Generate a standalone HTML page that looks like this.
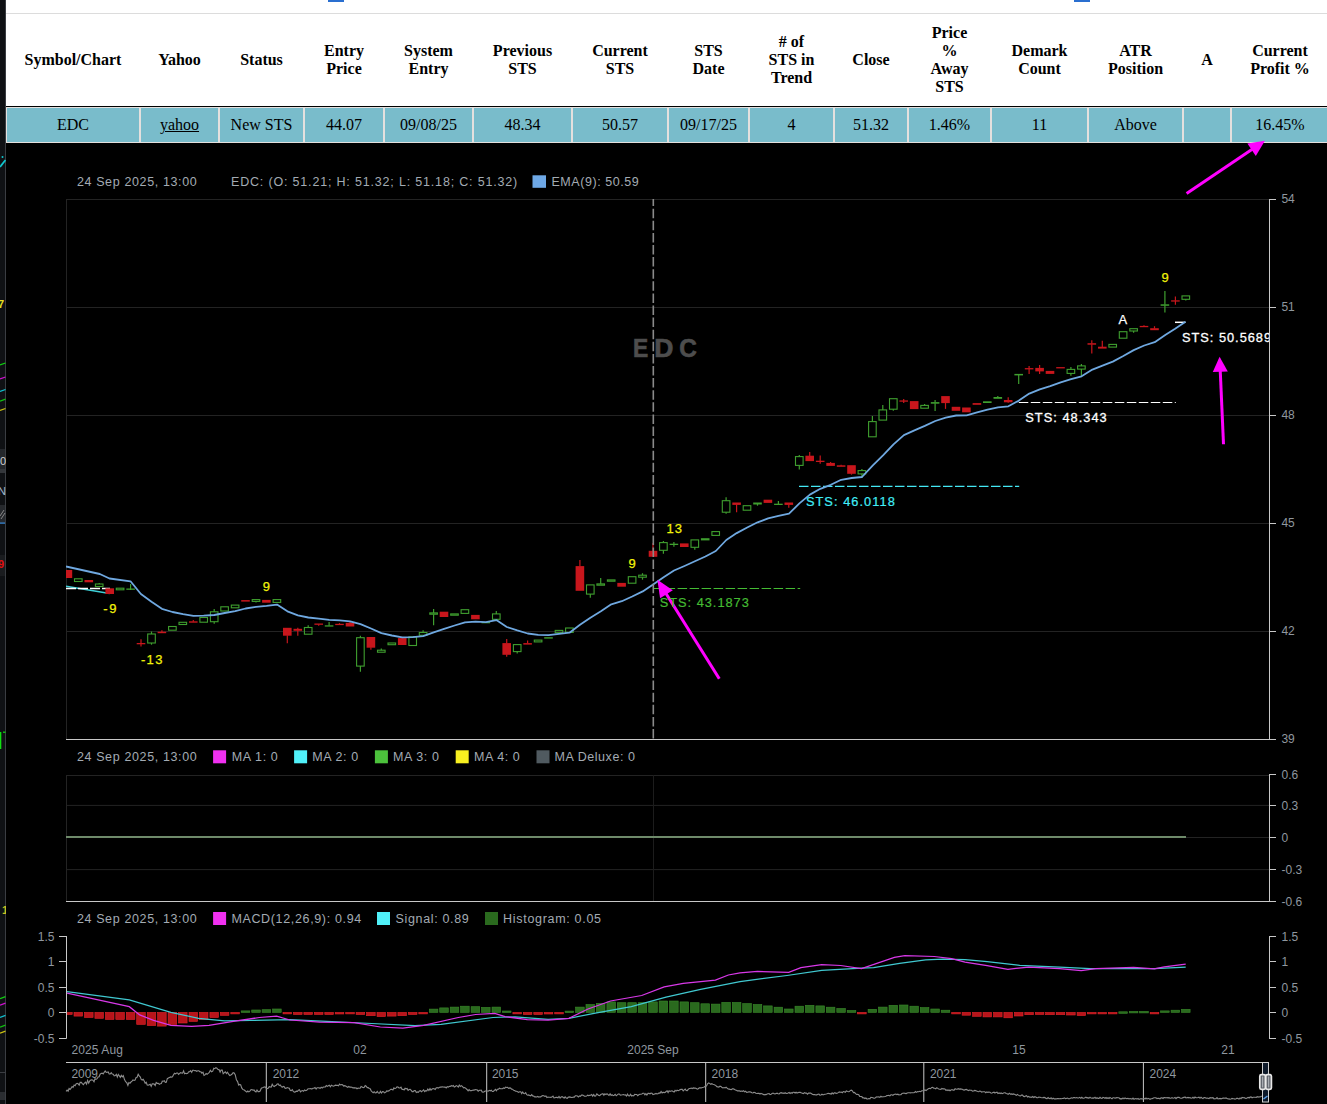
<!DOCTYPE html><html><head><meta charset="utf-8"><style>
*{margin:0;padding:0;box-sizing:border-box}
html,body{width:1327px;height:1104px;overflow:hidden;background:#000}
body{position:relative;font-family:"Liberation Sans",sans-serif}
.a{position:absolute}
.th{position:absolute;top:14px;height:92px;display:flex;align-items:center;justify-content:center;text-align:center;font:bold 16px/18px "Liberation Serif",serif;color:#000}
.td{position:absolute;top:108px;height:34px;background:#79bccb;display:flex;align-items:center;justify-content:center;font:16px/18px "Liberation Serif",serif;color:#000}
.lg{position:absolute;font-size:12.5px;line-height:15px;letter-spacing:0.55px;color:#a3abb3;white-space:nowrap}
.sq{position:absolute;width:12px;height:12px}
.ax{position:absolute;font-size:12.5px;line-height:14px;letter-spacing:0.4px;color:#9ba3ab;white-space:nowrap}
</style></head><body>

<div class="a" style="left:0;top:0;width:1327px;height:143px;background:#fff"></div>
<div class="a" style="left:6px;top:13px;width:1321px;height:1px;background:#dcdcdc"></div>
<div class="a" style="left:328px;top:0;width:16px;height:2px;background:#2a6fd0"></div>
<div class="a" style="left:1074px;top:0;width:16px;height:2px;background:#2a6fd0"></div>
<div class="a" style="left:6px;top:106px;width:1321px;height:1px;background:#000"></div>
<div class="a" style="left:6px;top:107px;width:1321px;height:36px;background:#e4e0de"></div>
<div class="th" style="left:7px;width:132px">Symbol/Chart</div>
<div class="td" style="left:7px;width:132px">EDC</div>
<div class="th" style="left:141px;width:77px">Yahoo</div>
<div class="td" style="left:141px;width:77px"><u>yahoo</u></div>
<div class="th" style="left:220px;width:83px">Status</div>
<div class="td" style="left:220px;width:83px">New STS</div>
<div class="th" style="left:305px;width:78px">Entry<br>Price</div>
<div class="td" style="left:305px;width:78px">44.07</div>
<div class="th" style="left:385px;width:87px">System<br>Entry</div>
<div class="td" style="left:385px;width:87px">09/08/25</div>
<div class="th" style="left:474px;width:97px">Previous<br>STS</div>
<div class="td" style="left:474px;width:97px">48.34</div>
<div class="th" style="left:573px;width:94px">Current<br>STS</div>
<div class="td" style="left:573px;width:94px">50.57</div>
<div class="th" style="left:669px;width:79px">STS<br>Date</div>
<div class="td" style="left:669px;width:79px">09/17/25</div>
<div class="th" style="left:750px;width:83px"># of<br>STS in<br>Trend</div>
<div class="td" style="left:750px;width:83px">4</div>
<div class="th" style="left:835px;width:72px">Close</div>
<div class="td" style="left:835px;width:72px">51.32</div>
<div class="th" style="left:909px;width:81px">Price<br>%<br>Away<br>STS</div>
<div class="td" style="left:909px;width:81px">1.46%</div>
<div class="th" style="left:992px;width:95px">Demark<br>Count</div>
<div class="td" style="left:992px;width:95px">11</div>
<div class="th" style="left:1089px;width:93px">ATR<br>Position</div>
<div class="td" style="left:1089px;width:93px">Above</div>
<div class="th" style="left:1184px;width:46px">A</div>
<div class="td" style="left:1184px;width:46px"></div>
<div class="th" style="left:1232px;width:96px">Current<br>Profit %</div>
<div class="td" style="left:1232px;width:96px">16.45%</div>
<div class="a" style="left:0;top:0;width:5px;height:1104px;background:#0f1114"></div>
<div class="a" style="left:5px;top:0;width:1px;height:1104px;background:#3a3d42"></div>
<svg class="a" style="left:0;top:0" width="6" height="1104"><rect x="0" y="449" width="5" height="20" fill="#24272b"/><rect x="0" y="469" width="5" height="4" fill="#34373b"/><rect x="0" y="505" width="5" height="18" fill="#26292d"/><rect x="0" y="522.5" width="5" height="1.2" fill="#3a8ee0"/><rect x="0" y="555" width="5" height="21" fill="#1a1c1f"/><text x="0" y="465" font-family="Liberation Sans" font-size="11" fill="#cfcfcf">0</text><text x="-2" y="495" font-family="Liberation Sans" font-size="11" fill="#a0b8d0">N</text><path d="M0,516 L4,510 M1,519 L5,513" stroke="#888" stroke-width="1"/><text x="-2" y="568" font-family="Liberation Sans" font-size="11" font-weight="bold" fill="#e01010">9</text><text x="-2" y="308" font-family="Liberation Sans" font-size="11" font-weight="bold" fill="#e8e020">7</text><text x="2" y="914" font-family="Liberation Sans" font-size="11" font-weight="bold" fill="#c8c020">1</text><circle cx="2.5" cy="157" r="1" fill="#10c8d0"/><line x1="0" y1="167" x2="5.5" y2="160" stroke="#10c8d0" stroke-width="1.8"/><line x1="0" y1="365.0" x2="5.5" y2="363.0" stroke="#10d010" stroke-width="1.3"/><line x1="0" y1="379.0" x2="5.5" y2="377.0" stroke="#d010d0" stroke-width="1.3"/><line x1="0" y1="391.5" x2="5.5" y2="389.5" stroke="#10c0d0" stroke-width="1.3"/><line x1="0" y1="401.1" x2="5.5" y2="399.1" stroke="#10c010" stroke-width="1.3"/><line x1="0" y1="410.5" x2="5.5" y2="408.5" stroke="#c8c010" stroke-width="1.3"/><line x1="0" y1="998.7" x2="5.5" y2="996.7" stroke="#10d010" stroke-width="1.3"/><line x1="0" y1="1005.2" x2="5.5" y2="1003.2" stroke="#d010d0" stroke-width="1.3"/><line x1="0" y1="1017.4" x2="5.5" y2="1015.4" stroke="#10c0d0" stroke-width="1.3"/><line x1="0" y1="1027.1" x2="5.5" y2="1025.1" stroke="#10c010" stroke-width="1.3"/><line x1="0" y1="1033.2" x2="5.5" y2="1031.2" stroke="#c8c010" stroke-width="1.3"/><rect x="0" y="732" width="1.3" height="17" fill="#10e010"/><rect x="3" y="731.6" width="2.5" height="1.2" fill="#10e010"/><rect x="0" y="1072" width="5" height="1" fill="#3a3d42"/><rect x="0" y="1092" width="5" height="8" fill="#2a2d31"/></svg>
<svg class="a" style="left:0;top:0" width="1327" height="1104" viewBox="0 0 1327 1104">
<line x1="66" y1="199.5" x2="1269" y2="199.5" stroke="#232323"/>
<line x1="66" y1="307.5" x2="1269" y2="307.5" stroke="#232323"/>
<line x1="66" y1="415.5" x2="1269" y2="415.5" stroke="#232323"/>
<line x1="66" y1="523.5" x2="1269" y2="523.5" stroke="#232323"/>
<line x1="66" y1="631.5" x2="1269" y2="631.5" stroke="#232323"/>
<line x1="66.5" y1="199" x2="66.5" y2="739" stroke="#232323"/>
<line x1="66" y1="739.5" x2="1269" y2="739.5" stroke="#c8c8c8"/>
<line x1="1269.5" y1="199" x2="1269.5" y2="740" stroke="#c8c8c8"/>
<line x1="1269" y1="199.5" x2="1276" y2="199.5" stroke="#c8c8c8"/>
<line x1="1269" y1="307.5" x2="1276" y2="307.5" stroke="#c8c8c8"/>
<line x1="1269" y1="415.5" x2="1276" y2="415.5" stroke="#c8c8c8"/>
<line x1="1269" y1="523.5" x2="1276" y2="523.5" stroke="#c8c8c8"/>
<line x1="1269" y1="631.5" x2="1276" y2="631.5" stroke="#c8c8c8"/>
<line x1="1269" y1="739.5" x2="1276" y2="739.5" stroke="#c8c8c8"/>
<text x="0" y="0" transform="translate(633.0,357) scale(0.86,1)" font-family="Liberation Sans" font-weight="bold" font-size="26.5" fill="#4d4d4d" stroke="#4d4d4d" stroke-width="0.7">E</text>
<text x="0" y="0" transform="translate(654.2,357) scale(1.0,1)" font-family="Liberation Sans" font-weight="bold" font-size="26.5" fill="#4d4d4d" stroke="#4d4d4d" stroke-width="0.7">D</text>
<text x="0" y="0" transform="translate(679.2,357) scale(0.92,1)" font-family="Liberation Sans" font-weight="bold" font-size="26.5" fill="#4d4d4d" stroke="#4d4d4d" stroke-width="0.7">C</text>
<defs><clipPath id="cm"><rect x="66" y="199" width="1204" height="540"/></clipPath></defs>
<g clip-path="url(#cm)">
<line x1="66" y1="586.2" x2="109.7" y2="593.4" stroke="#3fd0d8" stroke-width="1.5"/>
<line x1="66" y1="588.5" x2="110" y2="588.5" stroke="#ffffff" stroke-width="1.5" stroke-dasharray="10,2"/>
<line x1="653.6" y1="588.5" x2="800.2" y2="588.5" stroke="#44bb33" stroke-width="1.2" stroke-dasharray="9.5,2.5"/>
<line x1="799" y1="486.3" x2="1019.2" y2="486.3" stroke="#44e8f4" stroke-width="1.2" stroke-dasharray="9.5,2.5"/>
<line x1="1018.8" y1="402.5" x2="1175.8" y2="402.5" stroke="#ffffff" stroke-width="1.2" stroke-dasharray="9.5,2.5"/>
<line x1="1175" y1="322.3" x2="1185.5" y2="322.3" stroke="#ffffff" stroke-width="1.5"/>
<rect x="63.6" y="570" width="8.6" height="8" fill="#c8161c"/>
<rect x="74.5" y="578.8" width="7.6" height="2.7" fill="none" stroke="#3f9f2f" stroke-width="1.1"/>
<rect x="84.5" y="580" width="8.6" height="2.3" fill="#c8161c"/>
<line x1="99.2" y1="583" x2="99.2" y2="584" stroke="#3f9f2f" stroke-width="1.2"/>
<rect x="95.4" y="584" width="7.6" height="2.5" fill="none" stroke="#3f9f2f" stroke-width="1.1"/>
<rect x="105.4" y="588.3" width="8.6" height="5.7" fill="#c8161c"/>
<rect x="116.3" y="588.2" width="7.6" height="1.6" fill="none" stroke="#3f9f2f" stroke-width="1.1"/>
<line x1="130.6" y1="584" x2="130.6" y2="589" stroke="#3f9f2f" stroke-width="1.2"/>
<line x1="130.6" y1="589" x2="130.6" y2="590" stroke="#3f9f2f" stroke-width="1.2"/>
<rect x="126.3" y="588.5" width="8.6" height="1.3" fill="#3f9f2f"/>
<line x1="141" y1="639.2" x2="141" y2="643.5" stroke="#c8161c" stroke-width="1.2"/>
<line x1="141" y1="643.5" x2="141" y2="646.6" stroke="#c8161c" stroke-width="1.2"/>
<rect x="136.7" y="643" width="8.6" height="1.3" fill="#c8161c"/>
<line x1="151.5" y1="631.5" x2="151.5" y2="634" stroke="#3f9f2f" stroke-width="1.2"/>
<line x1="151.5" y1="643" x2="151.5" y2="644.7" stroke="#3f9f2f" stroke-width="1.2"/>
<rect x="147.7" y="634" width="7.6" height="9" fill="none" stroke="#3f9f2f" stroke-width="1.1"/>
<line x1="161.9" y1="630.2" x2="161.9" y2="632.2" stroke="#c8161c" stroke-width="1.2"/>
<rect x="157.6" y="631.7" width="8.6" height="1.5" fill="#c8161c"/>
<rect x="168.6" y="626.5" width="7.6" height="3.7" fill="none" stroke="#3f9f2f" stroke-width="1.1"/>
<rect x="179" y="622.3" width="7.6" height="2.2" fill="none" stroke="#3f9f2f" stroke-width="1.1"/>
<line x1="193.3" y1="620" x2="193.3" y2="621.8" stroke="#c8161c" stroke-width="1.2"/>
<rect x="189" y="621.3" width="8.6" height="1.4" fill="#c8161c"/>
<rect x="199.9" y="617.5" width="7.6" height="4.7" fill="none" stroke="#3f9f2f" stroke-width="1.1"/>
<line x1="214.2" y1="609" x2="214.2" y2="611.8" stroke="#3f9f2f" stroke-width="1.2"/>
<line x1="214.2" y1="621.7" x2="214.2" y2="623.7" stroke="#3f9f2f" stroke-width="1.2"/>
<rect x="210.4" y="611.8" width="7.6" height="9.9" fill="none" stroke="#3f9f2f" stroke-width="1.1"/>
<rect x="220.8" y="606.8" width="7.6" height="4.2" fill="none" stroke="#3f9f2f" stroke-width="1.1"/>
<rect x="231.3" y="605.1" width="7.6" height="2.7" fill="none" stroke="#3f9f2f" stroke-width="1.1"/>
<rect x="241.2" y="600.1" width="8.6" height="1.5" fill="#c8161c"/>
<line x1="256" y1="601.4" x2="256" y2="602.4" stroke="#3f9f2f" stroke-width="1.2"/>
<rect x="252.2" y="599.6" width="7.6" height="1.8" fill="none" stroke="#3f9f2f" stroke-width="1.1"/>
<rect x="262.1" y="599.9" width="8.6" height="2.8" fill="#c8161c"/>
<rect x="273.1" y="599.6" width="7.6" height="2.8" fill="none" stroke="#3f9f2f" stroke-width="1.1"/>
<line x1="287.3" y1="635.2" x2="287.3" y2="643.2" stroke="#c8161c" stroke-width="1.2"/>
<rect x="283" y="627.8" width="8.6" height="7.9" fill="#c8161c"/>
<line x1="297.8" y1="627.8" x2="297.8" y2="629.3" stroke="#c8161c" stroke-width="1.2"/>
<line x1="297.8" y1="630.3" x2="297.8" y2="635.7" stroke="#c8161c" stroke-width="1.2"/>
<rect x="293.5" y="628.8" width="8.6" height="2" fill="#c8161c"/>
<line x1="308.2" y1="625.3" x2="308.2" y2="627.5" stroke="#3f9f2f" stroke-width="1.2"/>
<rect x="304.4" y="627.5" width="7.6" height="6.7" fill="none" stroke="#3f9f2f" stroke-width="1.1"/>
<line x1="318.7" y1="624.3" x2="318.7" y2="625.8" stroke="#c8161c" stroke-width="1.2"/>
<rect x="314.4" y="623.5" width="8.6" height="1.3" fill="#c8161c"/>
<line x1="329.1" y1="622" x2="329.1" y2="625.8" stroke="#3f9f2f" stroke-width="1.2"/>
<rect x="324.8" y="625.3" width="8.6" height="1.3" fill="#3f9f2f"/>
<line x1="339.5" y1="623.1" x2="339.5" y2="624.3" stroke="#c8161c" stroke-width="1.2"/>
<rect x="335.2" y="623.8" width="8.6" height="1.3" fill="#c8161c"/>
<line x1="350" y1="621.3" x2="350" y2="623.3" stroke="#c8161c" stroke-width="1.2"/>
<rect x="345.7" y="622.8" width="8.6" height="3.7" fill="#c8161c"/>
<line x1="360.4" y1="635.7" x2="360.4" y2="637.7" stroke="#3f9f2f" stroke-width="1.2"/>
<line x1="360.4" y1="666.1" x2="360.4" y2="671.8" stroke="#3f9f2f" stroke-width="1.2"/>
<rect x="356.6" y="637.7" width="7.6" height="28.4" fill="none" stroke="#3f9f2f" stroke-width="1.1"/>
<line x1="370.9" y1="647.2" x2="370.9" y2="649.7" stroke="#c8161c" stroke-width="1.2"/>
<rect x="366.6" y="637" width="8.6" height="10.7" fill="#c8161c"/>
<line x1="381.3" y1="648.5" x2="381.3" y2="650.2" stroke="#3f9f2f" stroke-width="1.2"/>
<rect x="377.5" y="650.2" width="7.6" height="2" fill="none" stroke="#3f9f2f" stroke-width="1.1"/>
<rect x="388" y="643" width="7.6" height="1.7" fill="none" stroke="#3f9f2f" stroke-width="1.1"/>
<line x1="402.2" y1="637.3" x2="402.2" y2="638.6" stroke="#c8161c" stroke-width="1.2"/>
<rect x="397.9" y="638.1" width="8.6" height="6.9" fill="#c8161c"/>
<rect x="408.9" y="636.8" width="7.6" height="8.7" fill="none" stroke="#3f9f2f" stroke-width="1.1"/>
<line x1="423.1" y1="630.3" x2="423.1" y2="632.5" stroke="#3f9f2f" stroke-width="1.2"/>
<rect x="419.3" y="632.5" width="7.6" height="2.8" fill="none" stroke="#3f9f2f" stroke-width="1.1"/>
<line x1="433.6" y1="609.1" x2="433.6" y2="612.9" stroke="#3f9f2f" stroke-width="1.2"/>
<line x1="433.6" y1="614.2" x2="433.6" y2="625.3" stroke="#3f9f2f" stroke-width="1.2"/>
<rect x="429.8" y="612.9" width="7.6" height="1.3" fill="none" stroke="#3f9f2f" stroke-width="1.1"/>
<rect x="439.7" y="611.7" width="8.6" height="5.3" fill="#c8161c"/>
<rect x="450.7" y="613.9" width="7.6" height="1.3" fill="none" stroke="#3f9f2f" stroke-width="1.1"/>
<rect x="461.1" y="609.7" width="7.6" height="3.7" fill="none" stroke="#3f9f2f" stroke-width="1.1"/>
<rect x="471.1" y="614.9" width="8.6" height="4.4" fill="#c8161c"/>
<rect x="481.5" y="622" width="8.6" height="1.3" fill="#3f9f2f"/>
<line x1="496.3" y1="611.1" x2="496.3" y2="613.9" stroke="#3f9f2f" stroke-width="1.2"/>
<rect x="492.5" y="613.9" width="7.6" height="5.4" fill="none" stroke="#3f9f2f" stroke-width="1.1"/>
<line x1="506.7" y1="639.1" x2="506.7" y2="643.6" stroke="#c8161c" stroke-width="1.2"/>
<line x1="506.7" y1="654.3" x2="506.7" y2="656.8" stroke="#c8161c" stroke-width="1.2"/>
<rect x="502.4" y="643.1" width="8.6" height="11.7" fill="#c8161c"/>
<line x1="517.2" y1="651.6" x2="517.2" y2="653.6" stroke="#3f9f2f" stroke-width="1.2"/>
<rect x="513.4" y="644.6" width="7.6" height="7" fill="none" stroke="#3f9f2f" stroke-width="1.1"/>
<line x1="527.6" y1="640.6" x2="527.6" y2="643.6" stroke="#c8161c" stroke-width="1.2"/>
<rect x="523.3" y="643.1" width="8.6" height="1.5" fill="#c8161c"/>
<rect x="534.3" y="640.1" width="7.6" height="1.8" fill="none" stroke="#3f9f2f" stroke-width="1.1"/>
<rect x="544.2" y="637.2" width="8.6" height="1.4" fill="#3f9f2f"/>
<rect x="555.2" y="630.4" width="7.6" height="2.3" fill="none" stroke="#3f9f2f" stroke-width="1.1"/>
<rect x="565.6" y="628" width="7.6" height="4.4" fill="none" stroke="#3f9f2f" stroke-width="1.1"/>
<line x1="579.9" y1="560" x2="579.9" y2="566.6" stroke="#c8161c" stroke-width="1.2"/>
<rect x="575.6" y="566.1" width="8.6" height="24.7" fill="#c8161c"/>
<line x1="590.3" y1="594.1" x2="590.3" y2="597.8" stroke="#3f9f2f" stroke-width="1.2"/>
<rect x="586.5" y="584.9" width="7.6" height="9.2" fill="none" stroke="#3f9f2f" stroke-width="1.1"/>
<line x1="600.7" y1="578.1" x2="600.7" y2="583.9" stroke="#3f9f2f" stroke-width="1.2"/>
<rect x="596.9" y="583.9" width="7.6" height="1.3" fill="none" stroke="#3f9f2f" stroke-width="1.1"/>
<rect x="607.4" y="579.9" width="7.6" height="1.3" fill="none" stroke="#3f9f2f" stroke-width="1.1"/>
<rect x="617.3" y="582.9" width="8.6" height="3.8" fill="#c8161c"/>
<rect x="628.3" y="576.7" width="7.6" height="6.5" fill="none" stroke="#3f9f2f" stroke-width="1.1"/>
<line x1="642.5" y1="573.2" x2="642.5" y2="575.2" stroke="#3f9f2f" stroke-width="1.2"/>
<line x1="642.5" y1="577.2" x2="642.5" y2="579.7" stroke="#3f9f2f" stroke-width="1.2"/>
<rect x="638.7" y="575.2" width="7.6" height="2" fill="none" stroke="#3f9f2f" stroke-width="1.1"/>
<line x1="653" y1="542.9" x2="653" y2="551.3" stroke="#c8161c" stroke-width="1.2"/>
<rect x="648.7" y="550.8" width="8.6" height="6" fill="#c8161c"/>
<line x1="663.4" y1="541.1" x2="663.4" y2="542.6" stroke="#3f9f2f" stroke-width="1.2"/>
<line x1="663.4" y1="550.3" x2="663.4" y2="553.8" stroke="#3f9f2f" stroke-width="1.2"/>
<rect x="659.6" y="542.6" width="7.6" height="7.7" fill="none" stroke="#3f9f2f" stroke-width="1.1"/>
<line x1="673.9" y1="542" x2="673.9" y2="544.2" stroke="#3f9f2f" stroke-width="1.2"/>
<line x1="673.9" y1="544.4" x2="673.9" y2="546.7" stroke="#3f9f2f" stroke-width="1.2"/>
<rect x="669.6" y="543.7" width="8.6" height="1.3" fill="#3f9f2f"/>
<rect x="680" y="543.4" width="8.6" height="3.6" fill="#c8161c"/>
<line x1="694.8" y1="547.3" x2="694.8" y2="549.8" stroke="#3f9f2f" stroke-width="1.2"/>
<rect x="691" y="539.9" width="7.6" height="7.4" fill="none" stroke="#3f9f2f" stroke-width="1.1"/>
<rect x="700.9" y="538.2" width="8.6" height="2.2" fill="#3f9f2f"/>
<rect x="711.9" y="531.6" width="7.6" height="3.8" fill="none" stroke="#3f9f2f" stroke-width="1.1"/>
<line x1="726.1" y1="497.2" x2="726.1" y2="500.7" stroke="#3f9f2f" stroke-width="1.2"/>
<line x1="726.1" y1="512.2" x2="726.1" y2="513.7" stroke="#3f9f2f" stroke-width="1.2"/>
<rect x="722.3" y="500.7" width="7.6" height="11.5" fill="none" stroke="#3f9f2f" stroke-width="1.1"/>
<line x1="736.6" y1="504.4" x2="736.6" y2="512.2" stroke="#c8161c" stroke-width="1.2"/>
<rect x="732.3" y="502.5" width="8.6" height="2.4" fill="#c8161c"/>
<rect x="743.2" y="505.7" width="7.6" height="4.5" fill="none" stroke="#3f9f2f" stroke-width="1.1"/>
<line x1="757.5" y1="504" x2="757.5" y2="505.7" stroke="#3f9f2f" stroke-width="1.2"/>
<rect x="753.2" y="502.5" width="8.6" height="2" fill="#3f9f2f"/>
<rect x="763.6" y="499.7" width="8.6" height="3.2" fill="#c8161c"/>
<line x1="778.4" y1="500.9" x2="778.4" y2="504.2" stroke="#3f9f2f" stroke-width="1.2"/>
<rect x="774.1" y="503.7" width="8.6" height="1.3" fill="#3f9f2f"/>
<line x1="788.8" y1="504.4" x2="788.8" y2="507.7" stroke="#c8161c" stroke-width="1.2"/>
<rect x="784.5" y="502.5" width="8.6" height="2.4" fill="#c8161c"/>
<line x1="799.3" y1="454.9" x2="799.3" y2="456.6" stroke="#3f9f2f" stroke-width="1.2"/>
<line x1="799.3" y1="465.4" x2="799.3" y2="469.6" stroke="#3f9f2f" stroke-width="1.2"/>
<rect x="795.5" y="456.6" width="7.6" height="8.8" fill="none" stroke="#3f9f2f" stroke-width="1.1"/>
<line x1="809.7" y1="452.1" x2="809.7" y2="456.2" stroke="#c8161c" stroke-width="1.2"/>
<rect x="805.4" y="455.7" width="8.6" height="5.4" fill="#c8161c"/>
<line x1="820.2" y1="455.4" x2="820.2" y2="461.2" stroke="#c8161c" stroke-width="1.2"/>
<line x1="820.2" y1="461.4" x2="820.2" y2="463.7" stroke="#c8161c" stroke-width="1.2"/>
<rect x="815.9" y="460.7" width="8.6" height="1.3" fill="#c8161c"/>
<line x1="830.6" y1="461.9" x2="830.6" y2="463.4" stroke="#c8161c" stroke-width="1.2"/>
<rect x="826.3" y="462.9" width="8.6" height="3" fill="#c8161c"/>
<line x1="841.1" y1="464.7" x2="841.1" y2="465.8" stroke="#c8161c" stroke-width="1.2"/>
<rect x="836.8" y="465.3" width="8.6" height="1.5" fill="#c8161c"/>
<line x1="851.5" y1="473.3" x2="851.5" y2="474.6" stroke="#c8161c" stroke-width="1.2"/>
<rect x="847.2" y="465.2" width="8.6" height="8.6" fill="#c8161c"/>
<line x1="861.9" y1="469.1" x2="861.9" y2="470.6" stroke="#3f9f2f" stroke-width="1.2"/>
<line x1="861.9" y1="473.9" x2="861.9" y2="478.1" stroke="#3f9f2f" stroke-width="1.2"/>
<rect x="858.1" y="470.6" width="7.6" height="3.3" fill="none" stroke="#3f9f2f" stroke-width="1.1"/>
<line x1="872.4" y1="415.9" x2="872.4" y2="421.6" stroke="#3f9f2f" stroke-width="1.2"/>
<rect x="868.6" y="421.6" width="7.6" height="15.2" fill="none" stroke="#3f9f2f" stroke-width="1.1"/>
<line x1="882.8" y1="405.1" x2="882.8" y2="409.9" stroke="#3f9f2f" stroke-width="1.2"/>
<rect x="879" y="409.9" width="7.6" height="10.2" fill="none" stroke="#3f9f2f" stroke-width="1.1"/>
<line x1="893.3" y1="409.2" x2="893.3" y2="410.7" stroke="#3f9f2f" stroke-width="1.2"/>
<rect x="889.5" y="398.7" width="7.6" height="10.5" fill="none" stroke="#3f9f2f" stroke-width="1.1"/>
<line x1="903.7" y1="398.9" x2="903.7" y2="400.9" stroke="#c8161c" stroke-width="1.2"/>
<line x1="903.7" y1="400.9" x2="903.7" y2="402.9" stroke="#c8161c" stroke-width="1.2"/>
<rect x="899.4" y="400.4" width="8.6" height="1.3" fill="#c8161c"/>
<rect x="909.9" y="401.1" width="8.6" height="8" fill="#c8161c"/>
<line x1="924.6" y1="403.9" x2="924.6" y2="405.4" stroke="#3f9f2f" stroke-width="1.2"/>
<rect x="920.8" y="405.4" width="7.6" height="2.8" fill="none" stroke="#3f9f2f" stroke-width="1.1"/>
<line x1="935.1" y1="399.9" x2="935.1" y2="402.6" stroke="#3f9f2f" stroke-width="1.2"/>
<line x1="935.1" y1="403.2" x2="935.1" y2="410.9" stroke="#3f9f2f" stroke-width="1.2"/>
<rect x="930.8" y="402.1" width="8.6" height="1.6" fill="#3f9f2f"/>
<line x1="945.5" y1="402.6" x2="945.5" y2="408.9" stroke="#c8161c" stroke-width="1.2"/>
<rect x="941.2" y="396.1" width="8.6" height="7" fill="#c8161c"/>
<rect x="951.7" y="406.8" width="8.6" height="4" fill="#c8161c"/>
<rect x="962.1" y="407.5" width="8.6" height="4.8" fill="#c8161c"/>
<rect x="972.6" y="403.1" width="8.6" height="1.7" fill="#c8161c"/>
<rect x="983" y="401.3" width="8.6" height="1.7" fill="#3f9f2f"/>
<line x1="997.8" y1="396" x2="997.8" y2="397.5" stroke="#3f9f2f" stroke-width="1.2"/>
<rect x="993.5" y="397" width="8.6" height="1.8" fill="#3f9f2f"/>
<line x1="1008.2" y1="397.3" x2="1008.2" y2="400.5" stroke="#c8161c" stroke-width="1.2"/>
<line x1="1008.2" y1="401.8" x2="1008.2" y2="402.8" stroke="#c8161c" stroke-width="1.2"/>
<rect x="1003.9" y="400" width="8.6" height="2.3" fill="#c8161c"/>
<line x1="1018.7" y1="374.9" x2="1018.7" y2="383.9" stroke="#3f9f2f" stroke-width="1.2"/>
<rect x="1014.4" y="373.9" width="8.6" height="1.5" fill="#3f9f2f"/>
<line x1="1029.1" y1="366.1" x2="1029.1" y2="368.6" stroke="#c8161c" stroke-width="1.2"/>
<line x1="1029.1" y1="368.6" x2="1029.1" y2="373.9" stroke="#c8161c" stroke-width="1.2"/>
<rect x="1024.8" y="368.1" width="8.6" height="1.3" fill="#c8161c"/>
<line x1="1039.6" y1="365.1" x2="1039.6" y2="368.4" stroke="#c8161c" stroke-width="1.2"/>
<line x1="1039.6" y1="370.9" x2="1039.6" y2="373.9" stroke="#c8161c" stroke-width="1.2"/>
<rect x="1035.3" y="367.9" width="8.6" height="3.5" fill="#c8161c"/>
<rect x="1045.7" y="370.9" width="8.6" height="3" fill="#c8161c"/>
<rect x="1056.2" y="367.1" width="8.6" height="1.3" fill="#c8161c"/>
<line x1="1070.9" y1="367.1" x2="1070.9" y2="369.4" stroke="#3f9f2f" stroke-width="1.2"/>
<line x1="1070.9" y1="373.4" x2="1070.9" y2="375.7" stroke="#3f9f2f" stroke-width="1.2"/>
<rect x="1067.1" y="369.4" width="7.6" height="4" fill="none" stroke="#3f9f2f" stroke-width="1.1"/>
<line x1="1081.4" y1="364.1" x2="1081.4" y2="365.9" stroke="#3f9f2f" stroke-width="1.2"/>
<line x1="1081.4" y1="369.1" x2="1081.4" y2="376.4" stroke="#3f9f2f" stroke-width="1.2"/>
<rect x="1077.6" y="365.9" width="7.6" height="3.2" fill="none" stroke="#3f9f2f" stroke-width="1.1"/>
<line x1="1091.8" y1="340.2" x2="1091.8" y2="343.7" stroke="#c8161c" stroke-width="1.2"/>
<line x1="1091.8" y1="344.2" x2="1091.8" y2="353.6" stroke="#c8161c" stroke-width="1.2"/>
<rect x="1087.5" y="343.2" width="8.6" height="1.5" fill="#c8161c"/>
<line x1="1102.3" y1="340.7" x2="1102.3" y2="347.2" stroke="#c8161c" stroke-width="1.2"/>
<rect x="1098" y="346.7" width="8.6" height="1.9" fill="#c8161c"/>
<rect x="1108.9" y="344.4" width="7.6" height="2.7" fill="none" stroke="#3f9f2f" stroke-width="1.1"/>
<rect x="1119.3" y="331.7" width="7.6" height="6.5" fill="none" stroke="#3f9f2f" stroke-width="1.1"/>
<line x1="1133.6" y1="331" x2="1133.6" y2="332.7" stroke="#3f9f2f" stroke-width="1.2"/>
<rect x="1129.8" y="328.7" width="7.6" height="2.3" fill="none" stroke="#3f9f2f" stroke-width="1.1"/>
<line x1="1144" y1="325.2" x2="1144" y2="326.4" stroke="#c8161c" stroke-width="1.2"/>
<rect x="1139.7" y="325.9" width="8.6" height="1.3" fill="#c8161c"/>
<line x1="1154.5" y1="326.2" x2="1154.5" y2="328.7" stroke="#c8161c" stroke-width="1.2"/>
<rect x="1150.2" y="328.2" width="8.6" height="2" fill="#c8161c"/>
<line x1="1164.9" y1="290.9" x2="1164.9" y2="304.8" stroke="#3f9f2f" stroke-width="1.2"/>
<line x1="1164.9" y1="305.3" x2="1164.9" y2="312.6" stroke="#3f9f2f" stroke-width="1.2"/>
<rect x="1160.6" y="304.3" width="8.6" height="1.5" fill="#3f9f2f"/>
<line x1="1175.4" y1="296.4" x2="1175.4" y2="300.8" stroke="#c8161c" stroke-width="1.2"/>
<line x1="1175.4" y1="301.1" x2="1175.4" y2="304.8" stroke="#c8161c" stroke-width="1.2"/>
<rect x="1171.1" y="300.3" width="8.6" height="1.3" fill="#c8161c"/>
<line x1="1185.8" y1="299.3" x2="1185.8" y2="300.6" stroke="#3f9f2f" stroke-width="1.2"/>
<rect x="1182" y="295.9" width="7.6" height="3.4" fill="none" stroke="#3f9f2f" stroke-width="1.1"/>
<polyline points="66,566.5 99.8,574 109.5,578.5 130.5,581.3 140.9,594 151.5,601.8 161.9,608.8 172.5,612 183,614.2 193.4,615.9 203.7,615.7 214.3,615 224.7,613 235.2,611.2 245.6,608.5 256.1,606.8 266.5,605.9 277,604.6 287.4,611.3 297.9,615.3 308.3,617.5 318.8,618.6 329.2,619.8 339.7,620.4 350.1,621.4 360.5,624.2 371,628.5 381.4,633.1 391.9,635.5 402.3,637.4 412.8,637.2 423.2,636.1 433.7,632.3 444.1,628.9 454.6,625.5 465,622.3 475.5,621.6 485.9,622.1 496.4,620.1 506.8,627 517.3,630.4 527.7,633.5 538.2,634.9 548.6,635.2 559.1,633.8 569.5,632.7 580,624.8 590.4,617.7 600.9,611.3 611.3,604.3 621.8,601.2 632.2,596.5 642.7,591.4 653.1,584.4 663.6,577.2 674,570.5 684.5,566 694.9,561.3 705.4,556.5 715.8,551 726.3,540 736.7,533.1 747.2,527.5 757.6,522.3 768.1,518.4 778.5,515.9 789,513.7 799.4,503.4 809.9,494.6 820.3,488.8 830.8,484.8 841.2,479.8 851.7,478 862,477 872.6,465.6 883,455.3 893.5,444.3 903.9,435.1 914.4,430.4 924.8,425.9 935.3,421 945.7,417.6 956.2,415.5 966.6,415.3 977.1,412.3 987.5,409.6 998,407.3 1008.4,406.3 1018.9,400.6 1029.3,393.6 1039.8,389.3 1050.2,386.1 1060.7,382.3 1071.1,379.2 1081.6,376.3 1092.4,369.6 1102.5,365.6 1112.8,361.6 1123.3,356 1133.7,350.1 1144.2,345.5 1154.7,342.2 1165.6,334.7 1175.1,328.7 1185.5,321.8" fill="none" stroke="#6fa8e0" stroke-width="1.8" stroke-linejoin="round"/>
<line x1="653.3" y1="199" x2="653.3" y2="739" stroke="#8a8a8a" stroke-width="1.6" stroke-dasharray="9.5,2.6" stroke-dashoffset="2.4"/>
</g>
<text x="110.6" y="612.5" font-family="Liberation Sans" font-size="13" font-weight="normal" fill="#f2f20a" stroke="#f2f20a" stroke-width="0.25" letter-spacing="1.6" text-anchor="middle">-9</text>
<text x="152.35" y="664" font-family="Liberation Sans" font-size="13" font-weight="normal" fill="#f2f20a" stroke="#f2f20a" stroke-width="0.25" letter-spacing="1.3" text-anchor="middle">-13</text>
<text x="266.84999999999997" y="591" font-family="Liberation Sans" font-size="13" font-weight="normal" fill="#f2f20a" stroke="#f2f20a" stroke-width="0.25" letter-spacing="0.9" text-anchor="middle">9</text>
<text x="632.6500000000001" y="568" font-family="Liberation Sans" font-size="13" font-weight="normal" fill="#f2f20a" stroke="#f2f20a" stroke-width="0.25" letter-spacing="0.9" text-anchor="middle">9</text>
<text x="674.75" y="533" font-family="Liberation Sans" font-size="13" font-weight="normal" fill="#f2f20a" stroke="#f2f20a" stroke-width="0.25" letter-spacing="0.9" text-anchor="middle">13</text>
<text x="1165.55" y="282" font-family="Liberation Sans" font-size="13" font-weight="normal" fill="#f2f20a" stroke="#f2f20a" stroke-width="0.25" letter-spacing="0.9" text-anchor="middle">9</text>
<text x="1122.8" y="323.5" font-family="Liberation Sans" font-size="13" font-weight="normal" fill="#ffffff" stroke="#ffffff" stroke-width="0.25" letter-spacing="0" text-anchor="middle">A</text>
<line x1="1186.6" y1="193.4" x2="1253.3" y2="148.6" stroke="#ff00ff" stroke-width="3"/>
<polygon points="1264.9,140.8 1255.8,155.9 1247.4,143.5" fill="#ff00ff"/>
<line x1="1223.5" y1="444.3" x2="1220.2" y2="369.8" stroke="#ff00ff" stroke-width="3"/>
<polygon points="1219.6,356.8 1227.8,371.5 1212.8,372.1" fill="#ff00ff"/>
<line x1="719.3" y1="678.7" x2="665.4" y2="592.5" stroke="#ff00ff" stroke-width="3"/>
<polygon points="657.4,579.8 672.8,590.2 660.1,598.2" fill="#ff00ff"/>
<line x1="66" y1="805.4" x2="1269" y2="805.4" stroke="#232323"/>
<line x1="66" y1="869.6" x2="1269" y2="869.6" stroke="#232323"/>
<line x1="66" y1="775.5" x2="1269" y2="775.5" stroke="#232323"/>
<line x1="66.5" y1="775" x2="66.5" y2="901" stroke="#232323"/>
<line x1="653.5" y1="775" x2="653.5" y2="901" stroke="#1c1c1c"/>
<line x1="66" y1="837" x2="1186" y2="837" stroke="#6e8a6a" stroke-width="2"/>
<line x1="1186" y1="837.5" x2="1269" y2="837.5" stroke="#232323"/>
<line x1="66" y1="901.5" x2="1269" y2="901.5" stroke="#c8c8c8"/>
<line x1="1269.5" y1="774" x2="1269.5" y2="902" stroke="#c8c8c8"/>
<line x1="1269" y1="774.5" x2="1276" y2="774.5" stroke="#c8c8c8"/>
<line x1="1269" y1="805.5" x2="1276" y2="805.5" stroke="#c8c8c8"/>
<line x1="1269" y1="837.5" x2="1276" y2="837.5" stroke="#c8c8c8"/>
<line x1="1269" y1="869.5" x2="1276" y2="869.5" stroke="#c8c8c8"/>
<line x1="1269" y1="901.5" x2="1276" y2="901.5" stroke="#c8c8c8"/>
<line x1="66.5" y1="936" x2="66.5" y2="1038.5" stroke="#c8c8c8"/>
<line x1="59" y1="936.5" x2="66.5" y2="936.5" stroke="#c8c8c8"/>
<line x1="59" y1="961.5" x2="66.5" y2="961.5" stroke="#c8c8c8"/>
<line x1="59" y1="987.5" x2="66.5" y2="987.5" stroke="#c8c8c8"/>
<line x1="59" y1="1012.5" x2="66.5" y2="1012.5" stroke="#c8c8c8"/>
<line x1="59" y1="1038.5" x2="66.5" y2="1038.5" stroke="#c8c8c8"/>
<line x1="1269.5" y1="936" x2="1269.5" y2="1038.5" stroke="#c8c8c8"/>
<line x1="1269" y1="936.5" x2="1276" y2="936.5" stroke="#c8c8c8"/>
<line x1="1269" y1="961.5" x2="1276" y2="961.5" stroke="#c8c8c8"/>
<line x1="1269" y1="987.5" x2="1276" y2="987.5" stroke="#c8c8c8"/>
<line x1="1269" y1="1012.5" x2="1276" y2="1012.5" stroke="#c8c8c8"/>
<line x1="1269" y1="1038.5" x2="1276" y2="1038.5" stroke="#c8c8c8"/>
<defs><clipPath id="cmacd"><rect x="67" y="930" width="1202" height="110"/></clipPath></defs><g clip-path="url(#cmacd)">
<rect x="63.6" y="1012.4" width="8.6" height="2.1" fill="#b8141a" stroke="#e0242a" stroke-width="0.6"/>
<rect x="74" y="1012.4" width="8.6" height="3.7" fill="#b8141a" stroke="#e0242a" stroke-width="0.6"/>
<rect x="84.5" y="1012.4" width="8.6" height="5.1" fill="#b8141a" stroke="#e0242a" stroke-width="0.6"/>
<rect x="94.9" y="1012.4" width="8.6" height="5.9" fill="#b8141a" stroke="#e0242a" stroke-width="0.6"/>
<rect x="105.4" y="1012.4" width="8.6" height="7.1" fill="#b8141a" stroke="#e0242a" stroke-width="0.6"/>
<rect x="115.8" y="1012.4" width="8.6" height="7.1" fill="#b8141a" stroke="#e0242a" stroke-width="0.6"/>
<rect x="126.3" y="1012.4" width="8.6" height="7.1" fill="#b8141a" stroke="#e0242a" stroke-width="0.6"/>
<rect x="136.7" y="1012.4" width="8.6" height="12" fill="#b8141a" stroke="#e0242a" stroke-width="0.6"/>
<rect x="147.2" y="1012.4" width="8.6" height="13.2" fill="#b8141a" stroke="#e0242a" stroke-width="0.6"/>
<rect x="157.6" y="1012.4" width="8.6" height="13.7" fill="#b8141a" stroke="#e0242a" stroke-width="0.6"/>
<rect x="168.1" y="1012.4" width="8.6" height="12" fill="#b8141a" stroke="#e0242a" stroke-width="0.6"/>
<rect x="178.5" y="1012.4" width="8.6" height="10.6" fill="#b8141a" stroke="#e0242a" stroke-width="0.6"/>
<rect x="189" y="1012.4" width="8.6" height="9" fill="#b8141a" stroke="#e0242a" stroke-width="0.6"/>
<rect x="199.4" y="1012.4" width="8.6" height="7.3" fill="#b8141a" stroke="#e0242a" stroke-width="0.6"/>
<rect x="209.9" y="1012.4" width="8.6" height="5.1" fill="#b8141a" stroke="#e0242a" stroke-width="0.6"/>
<rect x="220.3" y="1012.4" width="8.6" height="3" fill="#b8141a" stroke="#e0242a" stroke-width="0.6"/>
<rect x="230.8" y="1012.4" width="8.6" height="1.5" fill="#b8141a" stroke="#e0242a" stroke-width="0.6"/>
<rect x="241.2" y="1010.9" width="8.6" height="1.5" fill="#2a6a1e" stroke="#3a8a2a" stroke-width="0.6"/>
<rect x="251.7" y="1010" width="8.6" height="2.4" fill="#2a6a1e" stroke="#3a8a2a" stroke-width="0.6"/>
<rect x="262.1" y="1009.7" width="8.6" height="2.7" fill="#2a6a1e" stroke="#3a8a2a" stroke-width="0.6"/>
<rect x="272.6" y="1009" width="8.6" height="3.4" fill="#2a6a1e" stroke="#3a8a2a" stroke-width="0.6"/>
<rect x="283" y="1012.4" width="8.6" height="1.5" fill="#b8141a" stroke="#e0242a" stroke-width="0.6"/>
<rect x="293.5" y="1012.4" width="8.6" height="2.1" fill="#b8141a" stroke="#e0242a" stroke-width="0.6"/>
<rect x="303.9" y="1012.4" width="8.6" height="2.1" fill="#b8141a" stroke="#e0242a" stroke-width="0.6"/>
<rect x="314.4" y="1012.4" width="8.6" height="2.1" fill="#b8141a" stroke="#e0242a" stroke-width="0.6"/>
<rect x="324.8" y="1012.4" width="8.6" height="2.1" fill="#b8141a" stroke="#e0242a" stroke-width="0.6"/>
<rect x="335.2" y="1012.4" width="8.6" height="1.6" fill="#b8141a" stroke="#e0242a" stroke-width="0.6"/>
<rect x="345.7" y="1012.4" width="8.6" height="1.5" fill="#b8141a" stroke="#e0242a" stroke-width="0.6"/>
<rect x="356.1" y="1012.4" width="8.6" height="2.1" fill="#b8141a" stroke="#e0242a" stroke-width="0.6"/>
<rect x="366.6" y="1012.4" width="8.6" height="3.3" fill="#b8141a" stroke="#e0242a" stroke-width="0.6"/>
<rect x="377" y="1012.4" width="8.6" height="4.2" fill="#b8141a" stroke="#e0242a" stroke-width="0.6"/>
<rect x="387.5" y="1012.4" width="8.6" height="3.7" fill="#b8141a" stroke="#e0242a" stroke-width="0.6"/>
<rect x="397.9" y="1012.4" width="8.6" height="3.3" fill="#b8141a" stroke="#e0242a" stroke-width="0.6"/>
<rect x="408.4" y="1012.4" width="8.6" height="2.1" fill="#b8141a" stroke="#e0242a" stroke-width="0.6"/>
<rect x="418.8" y="1012.4" width="8.6" height="1.5" fill="#b8141a" stroke="#e0242a" stroke-width="0.6"/>
<rect x="429.3" y="1009.1" width="8.6" height="3.3" fill="#2a6a1e" stroke="#3a8a2a" stroke-width="0.6"/>
<rect x="439.7" y="1007.9" width="8.6" height="4.5" fill="#2a6a1e" stroke="#3a8a2a" stroke-width="0.6"/>
<rect x="450.2" y="1007.1" width="8.6" height="5.3" fill="#2a6a1e" stroke="#3a8a2a" stroke-width="0.6"/>
<rect x="460.6" y="1006.2" width="8.6" height="6.2" fill="#2a6a1e" stroke="#3a8a2a" stroke-width="0.6"/>
<rect x="471.1" y="1006.7" width="8.6" height="5.7" fill="#2a6a1e" stroke="#3a8a2a" stroke-width="0.6"/>
<rect x="481.5" y="1007.4" width="8.6" height="5" fill="#2a6a1e" stroke="#3a8a2a" stroke-width="0.6"/>
<rect x="492" y="1007.1" width="8.6" height="5.3" fill="#2a6a1e" stroke="#3a8a2a" stroke-width="0.6"/>
<rect x="502.4" y="1011" width="8.6" height="1.5" fill="#2a6a1e" stroke="#3a8a2a" stroke-width="0.6"/>
<rect x="512.9" y="1012.4" width="8.6" height="1.5" fill="#b8141a" stroke="#e0242a" stroke-width="0.6"/>
<rect x="523.3" y="1012.4" width="8.6" height="2.1" fill="#b8141a" stroke="#e0242a" stroke-width="0.6"/>
<rect x="533.8" y="1012.4" width="8.6" height="2.1" fill="#b8141a" stroke="#e0242a" stroke-width="0.6"/>
<rect x="544.2" y="1012.4" width="8.6" height="1.6" fill="#b8141a" stroke="#e0242a" stroke-width="0.6"/>
<rect x="554.7" y="1012.4" width="8.6" height="1.5" fill="#b8141a" stroke="#e0242a" stroke-width="0.6"/>
<rect x="565.1" y="1011.1" width="8.6" height="1.5" fill="#2a6a1e" stroke="#3a8a2a" stroke-width="0.6"/>
<rect x="575.6" y="1007.1" width="8.6" height="5.3" fill="#2a6a1e" stroke="#3a8a2a" stroke-width="0.6"/>
<rect x="586" y="1004.5" width="8.6" height="7.9" fill="#2a6a1e" stroke="#3a8a2a" stroke-width="0.6"/>
<rect x="596.4" y="1003.3" width="8.6" height="9.1" fill="#2a6a1e" stroke="#3a8a2a" stroke-width="0.6"/>
<rect x="606.9" y="1001.9" width="8.6" height="10.5" fill="#2a6a1e" stroke="#3a8a2a" stroke-width="0.6"/>
<rect x="617.3" y="1002.7" width="8.6" height="9.7" fill="#2a6a1e" stroke="#3a8a2a" stroke-width="0.6"/>
<rect x="627.8" y="1002.7" width="8.6" height="9.7" fill="#2a6a1e" stroke="#3a8a2a" stroke-width="0.6"/>
<rect x="638.2" y="1002.7" width="8.6" height="9.7" fill="#2a6a1e" stroke="#3a8a2a" stroke-width="0.6"/>
<rect x="648.7" y="1001.9" width="8.6" height="10.5" fill="#2a6a1e" stroke="#3a8a2a" stroke-width="0.6"/>
<rect x="659.1" y="1001" width="8.6" height="11.4" fill="#2a6a1e" stroke="#3a8a2a" stroke-width="0.6"/>
<rect x="669.6" y="1001" width="8.6" height="11.4" fill="#2a6a1e" stroke="#3a8a2a" stroke-width="0.6"/>
<rect x="680" y="1001.9" width="8.6" height="10.5" fill="#2a6a1e" stroke="#3a8a2a" stroke-width="0.6"/>
<rect x="690.5" y="1002.7" width="8.6" height="9.7" fill="#2a6a1e" stroke="#3a8a2a" stroke-width="0.6"/>
<rect x="700.9" y="1003.8" width="8.6" height="8.6" fill="#2a6a1e" stroke="#3a8a2a" stroke-width="0.6"/>
<rect x="711.4" y="1004.1" width="8.6" height="8.3" fill="#2a6a1e" stroke="#3a8a2a" stroke-width="0.6"/>
<rect x="721.8" y="1002.4" width="8.6" height="10" fill="#2a6a1e" stroke="#3a8a2a" stroke-width="0.6"/>
<rect x="732.3" y="1002.5" width="8.6" height="9.9" fill="#2a6a1e" stroke="#3a8a2a" stroke-width="0.6"/>
<rect x="742.7" y="1003.6" width="8.6" height="8.8" fill="#2a6a1e" stroke="#3a8a2a" stroke-width="0.6"/>
<rect x="753.2" y="1004.5" width="8.6" height="7.9" fill="#2a6a1e" stroke="#3a8a2a" stroke-width="0.6"/>
<rect x="763.6" y="1005.9" width="8.6" height="6.5" fill="#2a6a1e" stroke="#3a8a2a" stroke-width="0.6"/>
<rect x="774.1" y="1007.2" width="8.6" height="5.2" fill="#2a6a1e" stroke="#3a8a2a" stroke-width="0.6"/>
<rect x="784.5" y="1009" width="8.6" height="3.4" fill="#2a6a1e" stroke="#3a8a2a" stroke-width="0.6"/>
<rect x="795" y="1006.2" width="8.6" height="6.2" fill="#2a6a1e" stroke="#3a8a2a" stroke-width="0.6"/>
<rect x="805.4" y="1005.3" width="8.6" height="7.1" fill="#2a6a1e" stroke="#3a8a2a" stroke-width="0.6"/>
<rect x="815.9" y="1005.9" width="8.6" height="6.5" fill="#2a6a1e" stroke="#3a8a2a" stroke-width="0.6"/>
<rect x="826.3" y="1007.2" width="8.6" height="5.2" fill="#2a6a1e" stroke="#3a8a2a" stroke-width="0.6"/>
<rect x="836.8" y="1008.5" width="8.6" height="3.9" fill="#2a6a1e" stroke="#3a8a2a" stroke-width="0.6"/>
<rect x="847.2" y="1010.5" width="8.6" height="1.9" fill="#2a6a1e" stroke="#3a8a2a" stroke-width="0.6"/>
<rect x="857.6" y="1012.4" width="8.6" height="1.5" fill="#b8141a" stroke="#e0242a" stroke-width="0.6"/>
<rect x="868.1" y="1009.3" width="8.6" height="3.1" fill="#2a6a1e" stroke="#3a8a2a" stroke-width="0.6"/>
<rect x="878.5" y="1007.1" width="8.6" height="5.3" fill="#2a6a1e" stroke="#3a8a2a" stroke-width="0.6"/>
<rect x="889" y="1005.3" width="8.6" height="7.1" fill="#2a6a1e" stroke="#3a8a2a" stroke-width="0.6"/>
<rect x="899.4" y="1005" width="8.6" height="7.4" fill="#2a6a1e" stroke="#3a8a2a" stroke-width="0.6"/>
<rect x="909.9" y="1006.2" width="8.6" height="6.2" fill="#2a6a1e" stroke="#3a8a2a" stroke-width="0.6"/>
<rect x="920.3" y="1007.6" width="8.6" height="4.8" fill="#2a6a1e" stroke="#3a8a2a" stroke-width="0.6"/>
<rect x="930.8" y="1009" width="8.6" height="3.4" fill="#2a6a1e" stroke="#3a8a2a" stroke-width="0.6"/>
<rect x="941.2" y="1010.2" width="8.6" height="2.2" fill="#2a6a1e" stroke="#3a8a2a" stroke-width="0.6"/>
<rect x="951.7" y="1012.4" width="8.6" height="1.5" fill="#b8141a" stroke="#e0242a" stroke-width="0.6"/>
<rect x="962.1" y="1012.4" width="8.6" height="2.8" fill="#b8141a" stroke="#e0242a" stroke-width="0.6"/>
<rect x="972.6" y="1012.4" width="8.6" height="3.9" fill="#b8141a" stroke="#e0242a" stroke-width="0.6"/>
<rect x="983" y="1012.4" width="8.6" height="4.5" fill="#b8141a" stroke="#e0242a" stroke-width="0.6"/>
<rect x="993.5" y="1012.4" width="8.6" height="4.5" fill="#b8141a" stroke="#e0242a" stroke-width="0.6"/>
<rect x="1003.9" y="1012.4" width="8.6" height="5.4" fill="#b8141a" stroke="#e0242a" stroke-width="0.6"/>
<rect x="1014.4" y="1012.4" width="8.6" height="3.6" fill="#b8141a" stroke="#e0242a" stroke-width="0.6"/>
<rect x="1024.8" y="1012.4" width="8.6" height="2.3" fill="#b8141a" stroke="#e0242a" stroke-width="0.6"/>
<rect x="1035.3" y="1012.4" width="8.6" height="2.1" fill="#b8141a" stroke="#e0242a" stroke-width="0.6"/>
<rect x="1045.7" y="1012.4" width="8.6" height="2.3" fill="#b8141a" stroke="#e0242a" stroke-width="0.6"/>
<rect x="1056.2" y="1012.4" width="8.6" height="2.3" fill="#b8141a" stroke="#e0242a" stroke-width="0.6"/>
<rect x="1066.6" y="1012.4" width="8.6" height="2.6" fill="#b8141a" stroke="#e0242a" stroke-width="0.6"/>
<rect x="1077.1" y="1012.4" width="8.6" height="3.2" fill="#b8141a" stroke="#e0242a" stroke-width="0.6"/>
<rect x="1087.5" y="1012.4" width="8.6" height="1.5" fill="#b8141a" stroke="#e0242a" stroke-width="0.6"/>
<rect x="1098" y="1012.4" width="8.6" height="1.5" fill="#b8141a" stroke="#e0242a" stroke-width="0.6"/>
<rect x="1108.4" y="1012.4" width="8.6" height="1.5" fill="#b8141a" stroke="#e0242a" stroke-width="0.6"/>
<rect x="1118.8" y="1011.8" width="8.6" height="1.5" fill="#2a6a1e" stroke="#3a8a2a" stroke-width="0.6"/>
<rect x="1129.3" y="1011.4" width="8.6" height="1.5" fill="#2a6a1e" stroke="#3a8a2a" stroke-width="0.6"/>
<rect x="1139.7" y="1011.4" width="8.6" height="1.5" fill="#2a6a1e" stroke="#3a8a2a" stroke-width="0.6"/>
<rect x="1150.2" y="1012.4" width="8.6" height="1.5" fill="#b8141a" stroke="#e0242a" stroke-width="0.6"/>
<rect x="1160.6" y="1010.9" width="8.6" height="1.5" fill="#2a6a1e" stroke="#3a8a2a" stroke-width="0.6"/>
<rect x="1171.1" y="1010.2" width="8.6" height="2.2" fill="#2a6a1e" stroke="#3a8a2a" stroke-width="0.6"/>
<rect x="1181.5" y="1009.3" width="8.6" height="3.1" fill="#2a6a1e" stroke="#3a8a2a" stroke-width="0.6"/>
<polyline points="66.9,991.5 129.3,999.8 170.9,1012.3 198.6,1018.3 224.6,1020.9 250.6,1020.4 290,1019.7 337,1021.8 371.7,1023.5 415,1025.6 441,1024.4 493,1017.5 515,1016.8 548.1,1019.4 568.9,1018.3 596.7,1012.8 631.3,1006.7 666,997.2 700.6,989.4 740,981.6 787,975.5 821.7,970.3 861.5,968.1 873.6,967.7 899.6,963.4 925.6,959.9 943,959.1 965,959.7 987.1,961.7 1019.7,965.3 1059.5,967.1 1090.2,968.6 1122.7,968.6 1154.4,968.6 1185.7,967.1" fill="none" stroke="#40c8d0" stroke-width="1.25"/>
<polyline points="66.9,993.2 129.3,1006.7 139.7,1014.9 153.6,1020.4 170.9,1025.3 191.7,1026.3 209,1025.3 233.3,1021.4 259.3,1017.5 276.6,1016.2 290,1020 319.7,1022.1 354.3,1022.7 380.3,1027 402.9,1028.2 423.6,1025.3 458.3,1017.5 475.6,1014.5 494.7,1013.5 505.1,1016.6 527.3,1019.7 548.1,1020.1 568.9,1018.3 588,1009 610.5,1001 641.7,995.5 664.2,986.8 683.3,983.3 715.4,980.2 728.4,975 740,972.9 757.5,971.5 788.7,972.4 800.9,967.7 821.7,964.6 840.7,965.5 861.5,968.6 894.4,957.3 904.8,955.6 934.3,956.5 951.6,958.7 965,962.2 987.1,965.7 1007.9,969.3 1028.7,967.1 1059.5,968.6 1081.2,970.7 1095.6,968.6 1133.6,967.5 1154.4,968.9 1164.3,966.8 1185.7,964.1" fill="none" stroke="#d838e8" stroke-width="1.25"/>
</g>
<line x1="66" y1="1062.5" x2="1262" y2="1062.5" stroke="#c8c8c8"/>
<line x1="266.3" y1="1062" x2="266.3" y2="1102" stroke="#c8c8c8"/>
<line x1="486.7" y1="1062" x2="486.7" y2="1102" stroke="#c8c8c8"/>
<line x1="705.7" y1="1062" x2="705.7" y2="1102" stroke="#c8c8c8"/>
<line x1="923.8" y1="1062" x2="923.8" y2="1102" stroke="#c8c8c8"/>
<line x1="1143.4" y1="1062" x2="1143.4" y2="1102" stroke="#c8c8c8"/>
<polyline points="66.1,1091.4 67.1,1090.1 68.1,1091.2 69.1,1088.5 70.1,1089.5 71.1,1088.2 72.1,1086.5 73.1,1087.4 74.1,1085.1 75.1,1085.8 76.1,1083.9 77.1,1083.3 78.1,1083.8 79.2,1085.1 80.2,1082.3 81.3,1082.4 82.3,1083.7 83.4,1084.6 84.5,1083 85.5,1082.1 86.6,1084 87.6,1080.4 88.7,1083.1 89.8,1080.8 90.8,1080.1 91.9,1079.8 92.9,1080.2 94,1081.8 95,1078.7 96,1079.4 97.1,1078.7 98.1,1077 99.1,1076.8 100.1,1074.2 101.1,1073.4 102.1,1073.1 103.2,1074 104.2,1072.3 105.2,1071 106.2,1072.3 107.2,1072.2 108.2,1071.9 109.2,1074 110.2,1074 111.2,1072.6 112.2,1074.1 113.2,1074.3 114.2,1075.9 115.3,1075.6 116.3,1074.4 117.3,1077.2 118.3,1074.4 119.3,1075.8 120.3,1077.3 121.3,1075.4 122.3,1076.9 123.3,1075.6 124.5,1079.6 125.6,1081.7 126.8,1082.7 127.9,1085.5 128.9,1082.6 130,1083.2 131,1082 132,1081.1 133,1079.9 134.1,1080.4 135.1,1080 136.1,1077.5 137.1,1077.3 138.2,1074.3 139.2,1075.8 140.2,1076.9 141.2,1079.4 142.2,1080 143.2,1079.3 144.2,1081 145.2,1083.2 146.2,1082.2 147.2,1085 148.2,1085.2 149.2,1084.7 150.2,1084.2 151.2,1086.4 152.2,1083.8 153.2,1083.9 154.2,1084.1 155.2,1085.5 156.2,1082.4 157.2,1083.4 158.3,1083.4 159.3,1084.3 160.3,1083.7 161.3,1083.6 162.3,1081.2 163.3,1081.3 164.3,1080.8 165.3,1082.4 166.3,1082.3 167.3,1078.7 168.4,1078.1 169.4,1077.6 170.4,1076.9 171.4,1077.1 172.5,1076.7 173.5,1074.8 174.5,1073.2 175.5,1073.9 176.6,1073 177.6,1073 178.6,1074.4 179.6,1073.4 180.6,1072.7 181.6,1073 182.6,1073.1 183.6,1070.8 184.6,1073.8 185.6,1073.3 186.6,1073.6 187.7,1073.3 188.7,1071.7 189.7,1071.7 190.7,1070.6 191.7,1072.4 192.7,1070.3 193.7,1070.3 194.7,1070.7 195.7,1070.5 196.7,1071.4 197.8,1070.7 198.8,1070.8 199.8,1071.7 200.9,1071.8 201.9,1073.1 203,1072.2 204,1075.5 205,1074.9 206.1,1073.5 207.1,1074.2 208.2,1073.4 209.3,1072.3 210.4,1070.3 211.6,1071.8 212.7,1071.2 213.8,1068.2 214.8,1068.7 215.9,1067.7 216.9,1068.2 218,1069.5 219,1069.6 220.1,1072.1 221.1,1070.1 222.2,1070 223.2,1073.8 224.3,1072.7 225.3,1071.8 226.4,1073.6 227.4,1072.2 228.5,1073.9 229.7,1075.5 230.8,1075 231.9,1074.3 233.1,1072.7 234.2,1073 235.3,1075 236.4,1079.8 237.6,1081.6 238.7,1085.1 239.7,1084.4 240.7,1084.9 241.7,1087.9 242.7,1089.4 243.8,1089.8 244.8,1090.5 245.8,1091.4 246.8,1092 247.8,1091 248.8,1091.9 249.9,1091.1 250.9,1089.7 251.9,1089.5 252.9,1090.2 254,1089.9 255,1091.3 256,1092 257,1090 258.1,1091.6 259.1,1091.6 260.1,1091.1 261.1,1088.7 262.1,1087.8 263.1,1087.5 264.1,1087.1 265.1,1086.8 266.1,1088 267.1,1088.7 268.1,1088.2 269.2,1086.6 270.2,1086.9 271.2,1087.1 272.2,1084.2 273.2,1085.9 274.2,1086.5 275.2,1085.7 276.2,1085.3 277.2,1084.1 278.2,1083.8 279.2,1085.6 280.2,1085 281.2,1086.4 282.2,1087.2 283.2,1086.4 284.2,1086.8 285.2,1088.4 286.2,1088.3 287.3,1087.5 288.3,1087.9 289.3,1088.3 290.3,1090.4 291.3,1090.6 292.3,1089.6 293.3,1091.5 294.3,1092.2 295.3,1091.9 296.3,1091.1 297.4,1091.4 298.4,1090.3 299.4,1089.8 300.5,1091.8 301.5,1090.9 302.6,1090.5 303.6,1091.2 304.6,1089.9 305.7,1090.7 306.7,1090.4 307.8,1088.9 308.8,1088.8 309.8,1088.8 310.9,1088.5 311.9,1089.1 312.9,1088.2 314,1088.3 315,1087.5 316.1,1089.1 317.1,1087.7 318.1,1087.7 319.2,1087.9 320.2,1088.4 321.2,1087.2 322.2,1088.1 323.2,1087.1 324.3,1087 325.3,1086.9 326.3,1085.6 327.3,1086.4 328.3,1085.7 329.3,1085.2 330.4,1086.8 331.4,1085.3 332.4,1085.8 333.4,1086.2 334.4,1085.7 335.4,1085.1 336.4,1085.4 337.5,1085.3 338.5,1085.7 339.5,1084.1 340.5,1084.9 341.5,1084.5 342.6,1084.8 343.6,1086.1 344.6,1085.7 345.7,1086.1 346.7,1086.7 347.8,1087.3 348.8,1086.5 349.8,1087.1 350.9,1087.1 351.9,1087.3 352.9,1088 354,1087.7 355,1088.1 356,1087.8 357,1088.7 358.1,1088 359.1,1088.2 360.1,1088.2 361.1,1086.5 362.1,1087 363.2,1087.7 364.2,1087.3 365.2,1085.6 366.2,1086.2 367.2,1087.6 368.2,1087.5 369.2,1088.5 370.2,1088.8 371.2,1090.8 372.2,1091.8 373.2,1092.7 374.2,1091.7 375.2,1092.9 376.3,1092.7 377.3,1091.5 378.4,1093 379.4,1093.2 380.4,1091.4 381.5,1093 382.5,1091.7 383.6,1091.8 384.6,1092.8 385.7,1092.4 386.7,1090.9 387.7,1091.1 388.8,1090.9 389.8,1090.1 390.8,1089.4 391.8,1089.3 392.9,1089.9 393.9,1087.9 394.9,1088.7 395.9,1088.1 397,1086.8 398,1087.1 399,1088 400,1088 401,1087.2 402.1,1089.5 403.1,1089.3 404.1,1089.9 405.1,1088.2 406.1,1088.8 407.1,1088.5 408.1,1090.4 409.2,1089.5 410.2,1089.4 411.2,1090.3 412.2,1091.6 413.2,1091.6 414.2,1090.6 415.3,1090.6 416.3,1092.5 417.3,1091.9 418.3,1092.4 419.4,1090.9 420.4,1090.6 421.5,1091.7 422.5,1090.9 423.6,1089.9 424.7,1091.6 425.7,1090.7 426.8,1090.9 427.8,1089 428.9,1090.5 430,1088.6 431,1090.1 432.1,1089 433.1,1088.5 434.2,1088.7 435.2,1089.4 436.2,1087.9 437.2,1087.5 438.2,1088.2 439.2,1087.5 440.2,1087.1 441.2,1087.1 442.2,1086.8 443.2,1087 444.2,1087.1 445.2,1087 446.2,1087.9 447.2,1086.7 448.3,1087.1 449.3,1086.3 450.3,1086.5 451.3,1085.7 452.3,1086.1 453.3,1085.5 454.3,1087 455.3,1086.5 456.3,1085.6 457.3,1086.1 458.3,1087 459.3,1085 460.3,1086.5 461.3,1085.6 462.4,1086.4 463.6,1087.8 464.7,1087.5 465.8,1088.4 467,1089.5 468.1,1090.9 469.1,1089.6 470.1,1090.7 471.1,1090.6 472.1,1090.5 473.1,1090.1 474.1,1090.1 475.1,1089.5 476.1,1089.8 477.1,1089.8 478.2,1091.3 479.2,1090.4 480.2,1090.3 481.2,1090.2 482.2,1092 483.2,1092.1 484.2,1091.8 485.2,1091 486.2,1091 487.2,1091 488.2,1091.2 489.3,1090.3 490.3,1090.8 491.3,1090.2 492.3,1091.5 493.3,1091.4 494.4,1090.3 495.4,1089.4 496.4,1090.8 497.4,1089.2 498.4,1089.1 499.5,1088.2 500.5,1088.8 501.5,1088.8 502.5,1088.7 503.5,1087.9 504.6,1088.4 505.6,1087.1 506.6,1087.5 507.6,1087.4 508.6,1088.4 509.6,1087.9 510.6,1088.1 511.6,1089.1 512.6,1089.2 513.6,1090.3 514.6,1090.5 515.6,1091.3 516.6,1091.3 517.6,1091.8 518.6,1092.4 519.6,1091.7 520.7,1091.8 521.7,1093.6 522.7,1092 523.7,1093.6 524.7,1093.7 525.7,1092.7 526.7,1094.7 527.7,1095.2 528.7,1094.9 529.7,1095.4 530.7,1095.9 531.7,1094.7 532.7,1095.9 533.7,1096.1 534.7,1096.9 535.7,1096.9 536.7,1097 537.8,1096.5 538.8,1097.2 539.8,1096.8 540.8,1096.9 541.8,1095.9 542.8,1095.6 543.8,1095.8 544.9,1096.4 545.9,1095.9 546.9,1097.6 547.9,1097 548.9,1097.2 549.9,1097.3 550.9,1097.4 551.9,1097.1 553,1096.1 554,1097.9 555,1097.8 556,1097.3 557,1097.4 558,1097.8 559,1096.5 560.1,1098.1 561.1,1097 562.1,1096.7 563.1,1097.2 564.1,1098.1 565.1,1096.9 566.2,1098 567.2,1098.4 568.2,1097.3 569.2,1096.9 570.2,1097.1 571.3,1097.4 572.3,1097.5 573.3,1097.1 574.3,1097.1 575.3,1095.8 576.4,1095.8 577.4,1096 578.4,1097 579.4,1095.9 580.4,1096.4 581.5,1095.1 582.5,1095.1 583.5,1095.5 584.5,1096.3 585.5,1096.3 586.6,1096.1 587.6,1095.2 588.6,1095.6 589.6,1095.4 590.6,1095.3 591.7,1094.5 592.7,1096.1 593.7,1094.5 594.7,1096.1 595.7,1095.9 596.8,1093.8 597.8,1094.7 598.8,1095.4 599.8,1095.7 600.8,1094.4 601.9,1094 602.9,1093.7 603.9,1095.3 604.9,1093.7 606,1094.6 607,1093.7 608,1094.6 609,1095.5 610.1,1093.8 611.1,1095.4 612.1,1094.7 613.1,1095.6 614.2,1095.2 615.2,1094.3 616.2,1095.8 617.3,1094.9 618.3,1094 619.3,1094 620.3,1095.1 621.4,1095 622.4,1094.8 623.4,1094.5 624.4,1095 625.5,1094.9 626.5,1096.1 627.5,1094.2 628.5,1095.8 629.6,1095.9 630.6,1094.3 631.6,1096 632.6,1095.5 633.7,1095.8 634.7,1094.4 635.7,1094.5 636.7,1094.5 637.7,1095.7 638.8,1094.8 639.8,1094.2 640.8,1094.3 641.8,1093.9 642.8,1093.3 643.9,1093.3 644.9,1094.9 645.9,1093.6 646.9,1095 648,1093.4 649,1093.4 650,1093.8 651,1093 652,1093.3 653,1094.5 654,1094.2 655,1093.9 656,1093.4 657,1093.9 658,1093.8 659,1092.9 660.1,1093.1 661.1,1091.5 662.1,1092.9 663.1,1092.2 664.1,1092.7 665.1,1092.4 666.1,1091.5 667.1,1090.8 668.1,1092.6 669.1,1090.8 670.1,1091.4 671.1,1091 672.1,1090.8 673.1,1091.6 674.1,1092 675.1,1090.4 676.1,1091.1 677.1,1090.2 678.2,1090.7 679.2,1090.2 680.2,1089.6 681.2,1089.4 682.2,1089.4 683.2,1090.8 684.2,1089.8 685.2,1089.1 686.2,1090.5 687.2,1090.6 688.2,1089.3 689.2,1088.5 690.2,1088.5 691.2,1088.1 692.2,1088.6 693.2,1087.9 694.2,1088.1 695.2,1088 696.3,1088.6 697.3,1089.2 698.3,1088.7 699.3,1087.9 700.3,1087.8 701.3,1087.9 702.3,1087.5 703.3,1087.3 704.3,1086.9 705.4,1086.1 706.5,1085.9 707.7,1083.6 708.8,1083 709.8,1083.6 710.8,1084.3 711.8,1083.7 712.8,1084.2 713.9,1084.5 714.9,1085.1 715.9,1085.6 716.9,1086.7 717.9,1086.9 718.9,1087.1 720,1086.1 721,1086.4 722,1087.5 723,1088 724.1,1087.6 725.1,1088 726.1,1087.3 727.1,1088.1 728.2,1089 729.2,1089.1 730.2,1089.4 731.3,1089.7 732.3,1088.9 733.3,1088.9 734.3,1089.2 735.4,1089.9 736.4,1090.3 737.4,1090.9 738.4,1090.8 739.5,1090.9 740.5,1091.3 741.5,1091 742.6,1091.3 743.6,1090.7 744.6,1091.9 745.6,1091.3 746.7,1092.4 747.7,1092.2 748.7,1091.9 749.7,1091.8 750.8,1092.1 751.8,1092.8 752.8,1093 753.9,1092.4 754.9,1092.5 755.9,1093.3 756.9,1093.5 758,1093.4 759,1093.3 760,1094 761,1093.3 762.1,1093.9 763.1,1094.2 764.1,1094.9 765.1,1094.4 766.1,1094.7 767.1,1094.1 768.1,1093.7 769.1,1093.6 770.1,1094.6 771.1,1094.2 772.1,1093.6 773.1,1093.1 774.1,1093.7 775.1,1093.9 776.1,1093.5 777.1,1093.2 778.1,1093.7 779.1,1094 780.1,1093 781.1,1092.7 782.1,1093.1 783.1,1093.1 784.1,1093.4 785.1,1092.7 786.1,1093.5 787.1,1093.4 788.1,1093 789.1,1092.5 790.1,1093.5 791.1,1092.6 792.1,1093.2 793.1,1092.3 794.1,1092.3 795.1,1093 796.1,1092.3 797.1,1093.1 798.1,1092.6 799.2,1092.3 800.2,1092.4 801.2,1092.8 802.3,1093.2 803.3,1093.7 804.4,1092.7 805.4,1093.1 806.4,1093 807.5,1094.1 808.5,1093.1 809.5,1093 810.6,1093.1 811.6,1093.7 812.7,1094.5 813.7,1094.6 814.7,1094.5 815.8,1094.9 816.8,1094.9 817.9,1094.2 818.9,1094.1 819.9,1095.2 821,1095 822,1094.1 823,1094.9 824,1094.4 825,1094.2 826.1,1094 827.1,1093.7 828.1,1093.3 829.1,1093.6 830.1,1093.5 831.1,1094.2 832.1,1092.9 833.2,1094 834.2,1092.8 835.2,1092.9 836.2,1093.4 837.2,1093.2 838.2,1092.6 839.2,1091.9 840.2,1092.3 841.3,1092.1 842.3,1092.7 843.3,1091.5 844.3,1091.7 845.3,1092.3 846.3,1090.9 847.3,1091.3 848.4,1091.7 849.4,1091.5 850.4,1090.4 851.4,1090.2 852.4,1090.9 853.5,1092.7 854.5,1092.4 855.6,1093.7 856.6,1094.5 857.6,1094.3 858.7,1094.8 859.7,1096.4 860.7,1096.5 861.8,1096.6 862.8,1097.9 863.9,1097.9 864.9,1098.5 865.9,1098 866.9,1098.9 867.9,1099 868.9,1098.5 869.9,1098.8 870.9,1097.3 871.9,1097.5 872.9,1097.7 873.9,1098.2 874.9,1098.1 875.9,1097.2 876.9,1096.9 877.9,1097 878.9,1096.9 879.9,1097.4 880.9,1096.2 881.9,1097 882.9,1096.8 883.9,1096.7 884.9,1096.5 885.9,1096.2 886.9,1095.6 887.9,1095.5 888.9,1095.4 889.9,1095.9 890.9,1094.8 891.9,1094.8 892.9,1095.4 893.9,1094.6 894.9,1094.2 895.9,1094 896.9,1094.6 897.9,1094.2 898.9,1095 899.9,1094.7 901,1094.7 902,1093.5 903,1093.2 904.1,1093 905.1,1093.4 906.2,1093.6 907.2,1093.1 908.2,1092.7 909.3,1092.8 910.3,1092.9 911.3,1092.8 912.4,1092.8 913.4,1092.8 914.5,1092.4 915.5,1091.5 916.5,1092.4 917.6,1091.5 918.6,1091.7 919.6,1091.3 920.7,1091.7 921.7,1090.8 922.8,1090.7 923.8,1090.5 924.9,1089.9 926.1,1090.5 927.2,1089.6 928.3,1088.7 929.4,1088.3 930.6,1088.7 931.7,1087.5 932.7,1087.3 933.7,1088.2 934.8,1088.2 935.8,1088.8 936.8,1087.7 937.8,1088.4 938.8,1089 939.8,1089.2 940.9,1089.4 941.9,1088.4 942.9,1088.9 943.9,1088.8 944.9,1089 945.9,1090.3 947,1089.9 948,1090.5 949,1089.9 950,1090.7 951,1090 952.1,1089.5 953.1,1090.1 954.1,1090.1 955.1,1088.8 956.2,1089.3 957.2,1089.2 958.2,1088.7 959.2,1089.1 960.3,1088.9 961.3,1089.1 962.3,1089.3 963.3,1089.9 964.3,1090.1 965.4,1089.6 966.4,1089.4 967.4,1090 968.4,1090.6 969.5,1090 970.5,1090.3 971.5,1090.3 972.5,1091.2 973.5,1091 974.6,1090.4 975.6,1090.6 976.6,1091.1 977.6,1091.5 978.6,1091.7 979.7,1091.1 980.7,1091.3 981.7,1092.2 982.7,1091.8 983.7,1091.7 984.8,1091.8 985.8,1092.8 986.8,1091.9 987.8,1092.4 988.8,1092.1 989.9,1092.3 990.9,1093 991.9,1093.2 992.9,1092.4 994,1092.2 995,1093 996,1092.4 997,1092.1 998,1093.5 999.1,1092.9 1000.1,1093.5 1001.1,1093 1002.1,1093.7 1003.1,1093.2 1004.2,1092.8 1005.2,1092.7 1006.2,1093.5 1007.2,1093.7 1008.2,1094.3 1009.3,1093.2 1010.3,1094.1 1011.3,1093.9 1012.3,1094.3 1013.3,1093.9 1014.4,1094.2 1015.4,1094.7 1016.4,1095.4 1017.4,1094.4 1018.5,1095.1 1019.5,1095.7 1020.5,1096 1021.5,1095.1 1022.5,1095.1 1023.6,1096.4 1024.6,1096.6 1025.6,1096.1 1026.6,1095.6 1027.6,1097 1028.7,1096.4 1029.7,1097.2 1030.7,1097 1031.7,1097.3 1032.7,1096.5 1033.8,1097.5 1034.8,1096.7 1035.8,1097.1 1036.8,1097.8 1037.8,1097.8 1038.9,1097 1039.9,1097.2 1040.9,1097.5 1041.9,1097.7 1043,1097.6 1044,1097.4 1045,1097.6 1046,1098.4 1047,1098.7 1048.1,1097.6 1049.1,1098.4 1050.1,1098.7 1051.1,1097.8 1052.1,1099 1053.2,1098.1 1054.2,1098.9 1055.2,1098.9 1056.2,1098.9 1057.2,1098.5 1058.3,1098.6 1059.3,1098.8 1060.3,1098.5 1061.3,1098.8 1062.4,1098.5 1063.4,1098.4 1064.4,1097.8 1065.4,1098.6 1066.4,1098.4 1067.5,1098 1068.5,1098.7 1069.5,1098.7 1070.5,1098.2 1071.6,1097.8 1072.6,1098.2 1073.6,1097.6 1074.6,1097.6 1075.6,1098 1076.7,1097.5 1077.7,1098 1078.7,1098 1079.7,1097.4 1080.8,1098.2 1081.8,1097.3 1082.8,1098.2 1083.8,1098.3 1084.8,1097.8 1085.9,1097.2 1086.9,1097.8 1087.9,1097.6 1088.9,1098.3 1090,1097.2 1091,1098.1 1092,1098.3 1093,1097.9 1094,1098.1 1095,1097.2 1096,1098.4 1097,1097.7 1098,1098.4 1099,1098.4 1100,1097.3 1101,1098.2 1102,1098.4 1103,1097.3 1104,1097.7 1105,1098.3 1106,1097.5 1107,1098.5 1108,1097.7 1109,1098.5 1110,1097.5 1111,1098.1 1112,1098.7 1113,1097.7 1114,1097.8 1115,1098.2 1116,1097.9 1117,1097.6 1118,1097.8 1119,1097.8 1120,1098.9 1121,1098.6 1122,1098.9 1123,1097.9 1124,1098.8 1125,1097.9 1126,1098.5 1127,1098.6 1128,1098.3 1129,1099 1130,1098.6 1131,1098.7 1132,1099.1 1133,1098.1 1134,1099.3 1135,1098.8 1136,1098.5 1137,1099.1 1138,1098.4 1139,1099.4 1140,1098.9 1141,1098.6 1142,1099.1 1143,1098.7 1144,1098.3 1145,1099 1146,1098 1147,1099.1 1148,1098.3 1149,1098.8 1150,1099.3 1151,1098.7 1152,1098.8 1153,1098.2 1154,1097.8 1155,1097.8 1156,1097.9 1157,1098.6 1158,1098.3 1159,1098.4 1160,1098.9 1161,1097.8 1162,1097.9 1163,1098.5 1164,1097.6 1165,1097.5 1166,1098 1167,1097.6 1168,1097.9 1169,1097.7 1170,1098.2 1171,1098.2 1172,1097.6 1173,1098.2 1174,1098 1175,1097.5 1176,1098.6 1177,1097.6 1178,1097.4 1179,1097.3 1180,1098 1181,1098.3 1182,1098.2 1183,1097.6 1184,1097.4 1185,1097 1186,1097.9 1187,1097.8 1188,1097.4 1189,1097.8 1190,1097.5 1191,1098.2 1192,1098 1193,1097.3 1194,1098.3 1195,1097.1 1196,1097.8 1197,1097.7 1198,1097.5 1199,1097.2 1200,1098.3 1201,1097.2 1202,1098 1203,1098.6 1204,1097.5 1205,1097.6 1206,1098.2 1207,1098.1 1208,1098.3 1209,1098.6 1210,1097.7 1211,1097.9 1212,1097.9 1213,1097.6 1214,1098.8 1215,1098.7 1216,1098.6 1217,1097.6 1218,1098.8 1219,1098.7 1220,1098.4 1221,1098.8 1222,1098.4 1223,1098.1 1224,1098 1225,1098.2 1226,1097.9 1227,1098.4 1228,1099 1229,1098.9 1230,1099.2 1231,1099 1232,1098.4 1233,1098.8 1234,1098.7 1235,1099.1 1236,1098.7 1237,1098.2 1238,1098.6 1239,1099 1240,1097.9 1241,1098.7 1242.1,1097.4 1243.1,1097.7 1244.1,1097.5 1245.1,1098.2 1246.1,1098.4 1247.1,1098 1248.1,1097.3 1249.1,1098 1250.1,1097.1 1251.1,1096.9 1252.1,1097.8 1253.1,1097.3 1254.1,1097.3 1255.2,1097.2 1256.2,1097.5 1257.2,1096.7 1258.2,1097.1 1259.2,1096.8 1260.2,1097 1261.2,1096.3 1262.2,1096.3" fill="none" stroke="#8c8c8c" stroke-width="1.1"/>
<rect x="1262.5" y="1062.5" width="6" height="39.5" fill="#0e1a2a" stroke="#d0d0d0" stroke-width="1"/>
<line x1="1263.5" y1="1099" x2="1267.5" y2="1096" stroke="#5aa0e8" stroke-width="1.5"/>
<rect x="1259.8" y="1074.6" width="5.6" height="14.8" rx="1.6" fill="#5a5f66" stroke="#e8e8e8" stroke-width="1.7"/>
<rect x="1265.8" y="1074.6" width="5.6" height="14.8" rx="1.6" fill="#5a5f66" stroke="#e8e8e8" stroke-width="1.7"/>
<line x1="1262.6" y1="1076.5" x2="1262.6" y2="1087.5" stroke="#a8acb2" stroke-width="1.4"/>
<line x1="1268.6" y1="1076.5" x2="1268.6" y2="1087.5" stroke="#a8acb2" stroke-width="1.4"/>
</svg>
<svg class="a" style="left:0;top:0" width="1327" height="1104" viewBox="0 0 1327 1104">
<text x="76.9" y="186" font-family="Liberation Sans" font-size="12.5" font-weight="normal" fill="#a3abb3" text-anchor="start" letter-spacing="0.63">24 Sep 2025, 13:00</text>
<text x="231" y="186" font-family="Liberation Sans" font-size="12.5" font-weight="normal" fill="#a3abb3" text-anchor="start" letter-spacing="0.82">EDC: (O: 51.21; H: 51.32; L: 51.18; C: 51.32)</text>
<rect x="532.5" y="175.3" width="13.5" height="12.5" fill="#6ea8e6"/>
<text x="551.4" y="186" font-family="Liberation Sans" font-size="12.5" font-weight="normal" fill="#a3abb3" text-anchor="start" letter-spacing="0.57">EMA(9): 50.59</text>
<text x="76.9" y="761.1" font-family="Liberation Sans" font-size="12.5" font-weight="normal" fill="#a3abb3" text-anchor="start" letter-spacing="0.63">24 Sep 2025, 13:00</text>
<rect x="213.1" y="750.3" width="13" height="13" fill="#f030f0"/>
<text x="231.8" y="761.1" font-family="Liberation Sans" font-size="12.5" font-weight="normal" fill="#a3abb3" text-anchor="start" letter-spacing="0.59">MA 1: 0</text>
<rect x="294.1" y="750.3" width="13" height="13" fill="#50f0f8"/>
<text x="312.2" y="761.1" font-family="Liberation Sans" font-size="12.5" font-weight="normal" fill="#a3abb3" text-anchor="start" letter-spacing="0.59">MA 2: 0</text>
<rect x="374.9" y="750.3" width="13" height="13" fill="#4cc23c"/>
<text x="393" y="761.1" font-family="Liberation Sans" font-size="12.5" font-weight="normal" fill="#a3abb3" text-anchor="start" letter-spacing="0.59">MA 3: 0</text>
<rect x="455.7" y="750.3" width="13" height="13" fill="#f8f020"/>
<text x="473.9" y="761.1" font-family="Liberation Sans" font-size="12.5" font-weight="normal" fill="#a3abb3" text-anchor="start" letter-spacing="0.59">MA 4: 0</text>
<rect x="536.5" y="750.3" width="13" height="13" fill="#505a60"/>
<text x="554.6" y="761.1" font-family="Liberation Sans" font-size="12.5" font-weight="normal" fill="#a3abb3" text-anchor="start" letter-spacing="0.54">MA Deluxe: 0</text>
<text x="76.9" y="923" font-family="Liberation Sans" font-size="12.5" font-weight="normal" fill="#a3abb3" text-anchor="start" letter-spacing="0.63">24 Sep 2025, 13:00</text>
<rect x="213.1" y="912" width="13" height="13" fill="#f030f0"/>
<text x="231.4" y="923" font-family="Liberation Sans" font-size="12.5" font-weight="normal" fill="#a3abb3" text-anchor="start" letter-spacing="0.65">MACD(12,26,9): 0.94</text>
<rect x="377" y="912" width="13" height="13" fill="#50f0f8"/>
<text x="395.5" y="923" font-family="Liberation Sans" font-size="12.5" font-weight="normal" fill="#a3abb3" text-anchor="start" letter-spacing="0.66">Signal: 0.89</text>
<rect x="485" y="912" width="13" height="13" fill="#2a6a1e"/>
<text x="503.1" y="923" font-family="Liberation Sans" font-size="12.5" font-weight="normal" fill="#a3abb3" text-anchor="start" letter-spacing="0.69">Histogram: 0.05</text>
<text x="1281.5" y="203.4" font-family="Liberation Sans" font-size="12" font-weight="normal" fill="#8f979f" text-anchor="start" letter-spacing="-0.15">54</text>
<text x="1281.5" y="311.4" font-family="Liberation Sans" font-size="12" font-weight="normal" fill="#8f979f" text-anchor="start" letter-spacing="-0.15">51</text>
<text x="1281.5" y="419.4" font-family="Liberation Sans" font-size="12" font-weight="normal" fill="#8f979f" text-anchor="start" letter-spacing="-0.15">48</text>
<text x="1281.5" y="527.4" font-family="Liberation Sans" font-size="12" font-weight="normal" fill="#8f979f" text-anchor="start" letter-spacing="-0.15">45</text>
<text x="1281.5" y="635.4" font-family="Liberation Sans" font-size="12" font-weight="normal" fill="#8f979f" text-anchor="start" letter-spacing="-0.15">42</text>
<text x="1281.5" y="743.4" font-family="Liberation Sans" font-size="12" font-weight="normal" fill="#8f979f" text-anchor="start" letter-spacing="-0.15">39</text>
<text x="1281.5" y="778.9" font-family="Liberation Sans" font-size="12" font-weight="normal" fill="#8f979f" text-anchor="start" letter-spacing="0.00">0.6</text>
<text x="1281.5" y="809.9" font-family="Liberation Sans" font-size="12" font-weight="normal" fill="#8f979f" text-anchor="start" letter-spacing="0.00">0.3</text>
<text x="1281.5" y="841.9" font-family="Liberation Sans" font-size="12" font-weight="normal" fill="#8f979f" text-anchor="start" letter-spacing="0.00">0</text>
<text x="1281.5" y="873.9" font-family="Liberation Sans" font-size="12" font-weight="normal" fill="#8f979f" text-anchor="start" letter-spacing="0.00">-0.3</text>
<text x="1281.5" y="905.9" font-family="Liberation Sans" font-size="12" font-weight="normal" fill="#8f979f" text-anchor="start" letter-spacing="0.00">-0.6</text>
<text x="1281.5" y="940.9" font-family="Liberation Sans" font-size="12" font-weight="normal" fill="#8f979f" text-anchor="start" letter-spacing="0.00">1.5</text>
<text x="54.5" y="940.9" font-family="Liberation Sans" font-size="12" font-weight="normal" fill="#8f979f" text-anchor="end" letter-spacing="0.00">1.5</text>
<text x="1281.5" y="965.9" font-family="Liberation Sans" font-size="12" font-weight="normal" fill="#8f979f" text-anchor="start" letter-spacing="0.00">1</text>
<text x="54.5" y="965.9" font-family="Liberation Sans" font-size="12" font-weight="normal" fill="#8f979f" text-anchor="end" letter-spacing="0.00">1</text>
<text x="1281.5" y="991.9" font-family="Liberation Sans" font-size="12" font-weight="normal" fill="#8f979f" text-anchor="start" letter-spacing="0.00">0.5</text>
<text x="54.5" y="991.9" font-family="Liberation Sans" font-size="12" font-weight="normal" fill="#8f979f" text-anchor="end" letter-spacing="0.00">0.5</text>
<text x="1281.5" y="1016.9" font-family="Liberation Sans" font-size="12" font-weight="normal" fill="#8f979f" text-anchor="start" letter-spacing="0.00">0</text>
<text x="54.5" y="1016.9" font-family="Liberation Sans" font-size="12" font-weight="normal" fill="#8f979f" text-anchor="end" letter-spacing="0.00">0</text>
<text x="1281.5" y="1042.9" font-family="Liberation Sans" font-size="12" font-weight="normal" fill="#8f979f" text-anchor="start" letter-spacing="0.00">-0.5</text>
<text x="54.5" y="1042.9" font-family="Liberation Sans" font-size="12" font-weight="normal" fill="#8f979f" text-anchor="end" letter-spacing="0.00">-0.5</text>
<text x="71.4" y="1053.7" font-family="Liberation Sans" font-size="12" font-weight="normal" fill="#8f979f" text-anchor="start" letter-spacing="0.12">2025 Aug</text>
<text x="360" y="1053.7" font-family="Liberation Sans" font-size="12" font-weight="normal" fill="#8f979f" text-anchor="middle" letter-spacing="0.00">02</text>
<text x="653" y="1053.7" font-family="Liberation Sans" font-size="12" font-weight="normal" fill="#8f979f" text-anchor="middle" letter-spacing="0.00">2025 Sep</text>
<text x="1019" y="1053.7" font-family="Liberation Sans" font-size="12" font-weight="normal" fill="#8f979f" text-anchor="middle" letter-spacing="0.00">15</text>
<text x="1228" y="1053.7" font-family="Liberation Sans" font-size="12" font-weight="normal" fill="#8f979f" text-anchor="middle" letter-spacing="0.00">21</text>
<text x="71.4" y="1077.8" font-family="Liberation Sans" font-size="12" font-weight="normal" fill="#8f979f" text-anchor="start" letter-spacing="-0.03">2009</text>
<text x="272.7" y="1077.8" font-family="Liberation Sans" font-size="12" font-weight="normal" fill="#8f979f" text-anchor="start" letter-spacing="-0.03">2012</text>
<text x="491.9" y="1077.8" font-family="Liberation Sans" font-size="12" font-weight="normal" fill="#8f979f" text-anchor="start" letter-spacing="-0.03">2015</text>
<text x="711.5" y="1077.8" font-family="Liberation Sans" font-size="12" font-weight="normal" fill="#8f979f" text-anchor="start" letter-spacing="-0.03">2018</text>
<text x="929.9" y="1077.8" font-family="Liberation Sans" font-size="12" font-weight="normal" fill="#8f979f" text-anchor="start" letter-spacing="-0.03">2021</text>
<text x="1149.5" y="1077.8" font-family="Liberation Sans" font-size="12" font-weight="normal" fill="#8f979f" text-anchor="start" letter-spacing="-0.03">2024</text>
<text x="659.7" y="606.5" font-family="Liberation Sans" font-size="12.8" font-weight="normal" fill="#44bb33" stroke="#44bb33" stroke-width="0.2" text-anchor="start" letter-spacing="0.99">STS: 43.1873</text>
<text x="805.9" y="505.7" font-family="Liberation Sans" font-size="12.8" font-weight="normal" fill="#40eef8" stroke="#40eef8" stroke-width="0.2" text-anchor="start" letter-spacing="1.05">STS: 46.0118</text>
<text x="1025.3" y="421.9" font-family="Liberation Sans" font-size="12.8" font-weight="normal" fill="#ffffff" stroke="#ffffff" stroke-width="0.3" text-anchor="start" letter-spacing="1.03">STS: 48.343</text>
<svg x="1182" y="320" width="87" height="30" overflow="hidden">
<text x="0" y="22.3" font-family="Liberation Sans" font-size="12.8" font-weight="normal" fill="#ffffff" stroke="#ffffff" stroke-width="0.3" text-anchor="start" letter-spacing="0.98">STS: 50.5689</text>
</svg>
</svg>
</body></html>
